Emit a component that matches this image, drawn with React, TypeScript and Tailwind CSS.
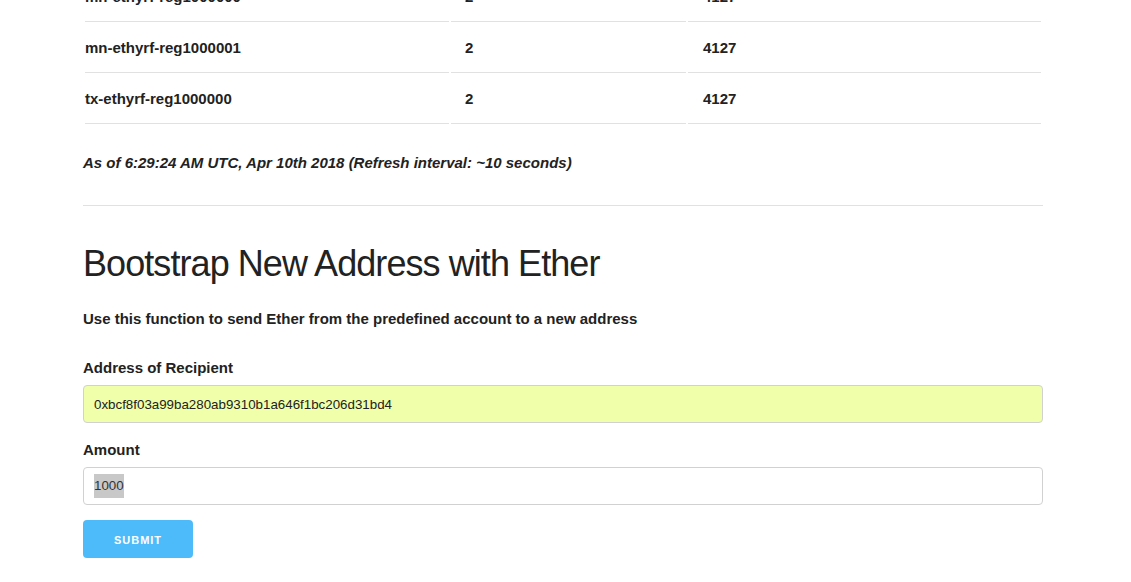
import React from 'react'

const rows = [
  { id: 'mn-ethyrf-reg1000000', count: '2', block: '4127' },
  { id: 'mn-ethyrf-reg1000001', count: '2', block: '4127' },
  { id: 'tx-ethyrf-reg1000000', count: '2', block: '4127' },
]

export default function App() {
  return (
    <div className="min-h-[582px] overflow-hidden bg-white font-['Liberation_Sans',Arial,sans-serif] text-[15px] leading-6 text-[#222]">
      <div className="ml-[83px] w-[960px]">
        <table className="-mt-[29px] mb-[25px] w-full border-separate border-spacing-0.5">
          <tbody>
            {rows.map((row) => (
              <tr key={row.id}>
                <td className="w-[364px] border-b border-[#e1e1e1] py-3 pr-[15px] pl-0 font-bold">{row.id}</td>
                <td className="w-[235px] border-b border-[#e1e1e1] py-3 pr-[15px] pl-[14px] font-bold">{row.count}</td>
                <td className="w-[353px] border-b border-[#e1e1e1] py-3 pr-0 pl-[15px] font-bold">{row.block}</td>
              </tr>
            ))}
          </tbody>
        </table>

        <p className="font-bold italic">As of 6:29:24 AM UTC, Apr 10th 2018 (Refresh interval: ~10 seconds)</p>

        <hr className="mt-[30px] mb-[35px] border-0 border-t border-[#e1e1e1]" />

        <h2 className="mb-[21px] text-[36px] leading-[45px] font-normal tracking-[-0.93px]">Bootstrap New Address with Ether</h2>

        <p className="mb-[25px] font-bold">Use this function to send Ether from the predefined account to a new address</p>

        <form onSubmit={(e) => e.preventDefault()}>
          <label className="mb-[5px] block font-bold">Address of Recipient</label>
          <input
            type="text"
            defaultValue="0xbcf8f03a99ba280ab9310b1a646f1bc206d31bd4"
            className="mb-[15px] block h-[38px] w-full rounded border border-[#d1d1d1] bg-[#f0ffaa] px-[10px] py-[6px] text-[13.33px] text-[#222] outline-none"
          />

          <label className="mb-[5px] block font-bold">Amount</label>
          <div className="mb-[15px] flex h-[38px] w-full items-center rounded border border-[#d1d1d1] bg-white px-[10px] text-[13.33px] text-[#333]">
            <span className="bg-[#c8c8c8]">1000</span>
          </div>

          <button
            type="submit"
            className="h-[38px] w-[110px] rounded bg-[#4dbbfa] pt-[1px] text-[11px] font-bold tracking-[1px] text-white uppercase"
          >
            Submit
          </button>
        </form>
      </div>
    </div>
  )
}
